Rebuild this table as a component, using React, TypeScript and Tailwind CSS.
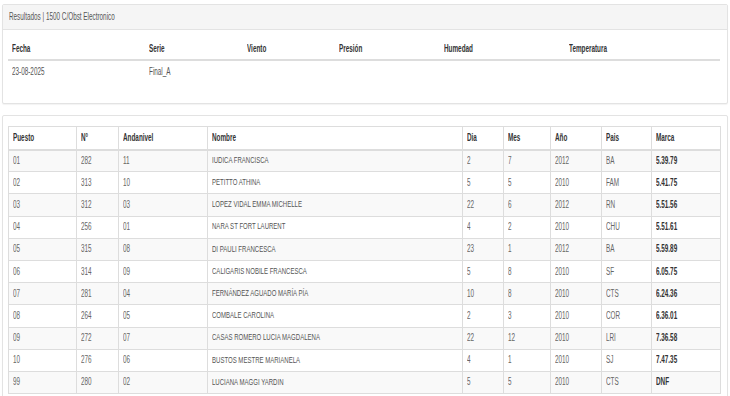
import React from "react";

const rows = [
  ["01", "282", "11", "IUDICA FRANCISCA", "2", "7", "2012", "BA", "5.39.79"],
  ["02", "313", "10", "PETITTO ATHINA", "5", "5", "2010", "FAM", "5.41.75"],
  ["03", "312", "03", "LOPEZ VIDAL EMMA MICHELLE", "22", "6", "2012", "RN", "5.51.56"],
  ["04", "256", "01", "NARA ST FORT LAURENT", "4", "2", "2010", "CHU", "5.51.61"],
  ["05", "315", "08", "DI PAULI FRANCESCA", "23", "1", "2012", "BA", "5.59.89"],
  ["06", "314", "09", "CALIGARIS NOBILE FRANCESCA", "5", "8", "2010", "SF", "6.05.75"],
  ["07", "281", "04", "FERNÁNDEZ AGUADO MARÍA PÍA", "10", "8", "2010", "CTS", "6.24.36"],
  ["08", "264", "05", "COMBALE CAROLINA", "2", "3", "2010", "COR", "6.36.01"],
  ["09", "272", "07", "CASAS ROMERO LUCIA MAGDALENA", "22", "12", "2010", "LRI", "7.36.58"],
  ["10", "276", "06", "BUSTOS MESTRE MARIANELA", "4", "1", "2010", "SJ", "7.47.35"],
  ["99", "280", "02", "LUCIANA MAGGI YARDIN", "5", "5", "2010", "CTS", "DNF"],
];

const headers = ["Puesto", "N°", "Andanivel", "Nombre", "Dia", "Mes", "Año", "Pais", "Marca"];
const widths = ["w-[68px]", "w-[42px]", "w-[89px]", "w-[255px]", "w-[41px]", "w-[47px]", "w-[51px]", "w-[50px]", "w-[69px]"];

function T({ children, className = "" }: { children: React.ReactNode; className?: string }) {
  return (
    <span className={"inline-block origin-left scale-x-[0.635] whitespace-nowrap " + className}>
      {children}
    </span>
  );
}

export default function App() {
  return (
    <div
      className="min-h-[396px] bg-white px-[2px] pt-[4px] text-[10px] leading-none text-[#555]"
      style={{ fontFamily: '"Liberation Sans", Arial, sans-serif' }}
    >
      {/* Top panel */}
      <div className="border border-[#e3e3e3] rounded-[2px] bg-white shadow-[0_1px_1px_rgba(0,0,0,0.05)]">
        <div className="h-[25px] bg-[#f5f5f5] border-b border-[#e3e3e3] flex items-center pl-[6px]">
          <T className="text-[#555]">Resultados | 1500 C/Obst Electronico</T>
        </div>
        <div className="pl-[5px] pr-[6px] pt-[8px] pb-[21px]">
          <table className="w-[712px] border-collapse table-fixed">
            <thead>
              <tr>
                {[
                  ["Fecha", "w-[137px]"],
                  ["Serie", "w-[98px]"],
                  ["Viento", "w-[92px]"],
                  ["Presión", "w-[105px]"],
                  ["Humedad", "w-[125px]"],
                  ["Temperatura", "w-[155px]"],
                ].map(([h, w]) => (
                  <th key={h} className={w + " h-[22px] p-0 pl-[4px] text-left align-middle font-bold text-[#333] border-b-2 border-[#ddd]"}>
                    <T>{h}</T>
                  </th>
                ))}
              </tr>
            </thead>
            <tbody>
              <tr>
                {["23-08-2025", "Final_A", "", "", "", ""].map((v, i) => (
                  <td key={i} className="h-[22px] p-0 pl-[4px] align-middle">
                    <T>{v}</T>
                  </td>
                ))}
              </tr>
            </tbody>
          </table>
        </div>
      </div>

      {/* Results panel */}
      <div className="mt-[11px] border border-[#e3e3e3] rounded-[2px] bg-white shadow-[0_1px_1px_rgba(0,0,0,0.05)] pl-[5px] pr-[6px] pt-[10px] pb-[20px]">
        <table className="w-[712px] border-collapse table-fixed border border-[#ddd]">
          <thead>
            <tr>
              {headers.map((h, i) => (
                <th
                  key={h}
                  className={widths[i] + " h-[23px] p-0 pl-[4px] pt-[1px] text-left align-middle font-bold text-[#333] border border-[#ddd] border-b-2"}
                >
                  <T>{h}</T>
                </th>
              ))}
            </tr>
          </thead>
          <tbody>
            {rows.map((r, ri) => (
              <tr key={ri} className={ri % 2 === 0 ? "bg-[#f9f9f9]" : "bg-white"}>
                {r.map((v, ci) => (
                  <td
                    key={ci}
                    className={
                      "h-[22.2px] p-0 pl-[4px] align-middle border border-[#ddd] " +
                      (ci === 8
                        ? "font-bold text-[#333]"
                        : ci === 3
                        ? "text-[9.5px] text-[#555] pb-[2px]"
                        : "text-[#666]")
                    }
                  >
                    <T className={ci === 3 ? "scale-x-[0.6]" : ""}>{v}</T>
                  </td>
                ))}
              </tr>
            ))}
          </tbody>
        </table>
      </div>
    </div>
  );
}
